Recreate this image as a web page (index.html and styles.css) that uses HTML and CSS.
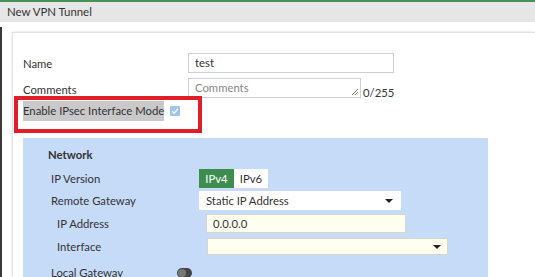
FILE: index.html
```html
<!DOCTYPE html>
<html>
<head>
<meta charset="utf-8">
<link rel="stylesheet" href="styles.css">
</head>
<body>
<div class="titlebar">New VPN Tunnel</div>
<div class="main">
  <div class="card">
    <div class="row row-name">
      <span class="label">Name</span>
      <div class="input name-input">test</div>
    </div>
    <div class="row row-comments">
      <span class="label">Comments</span>
      <div class="textarea"><span class="placeholder">Comments</span>
        <svg class="grip" width="9" height="9" viewBox="0 0 9 9"><path d="M8 2 L2 8 M8 5 L5 8" stroke="#777" stroke-width="1" fill="none"/></svg>
      </div>
      <span class="counter">0/255</span>
    </div>
    <div class="row row-ipsec">
      <span class="label hl">Enable IPsec Interface Mode</span>
      <span class="check"><svg width="10" height="10" viewBox="0 0 10 10"><rect width="10" height="10" rx="1" fill="#9ec4ee"/><path d="M2.2 5.2 L4.2 7.2 L8 2.6" stroke="#fff" stroke-width="1.4" fill="none"/></svg></span>
    </div>
    <div class="panel">
      <div class="panel-title">Network</div>
      <div class="prow prow-ver">
        <span class="plabel">IP Version</span>
        <div class="seg"><span class="seg-on">IPv4</span><span class="seg-off">IPv6</span></div>
      </div>
      <div class="prow prow-gw">
        <span class="plabel">Remote Gateway</span>
        <div class="select white">Static IP Address<span class="arrow"></span></div>
      </div>
      <div class="prow prow-ip sub">
        <span class="plabel">IP Address</span>
        <div class="input ivory ip-input">0.0.0.0</div>
      </div>
      <div class="prow prow-if sub">
        <span class="plabel">Interface</span>
        <div class="select ivory if-select"><span class="arrow"></span></div>
      </div>
      <div class="prow prow-lg">
        <span class="plabel lg-label">Local Gateway</span>
        <span class="toggle"><span class="knob"></span></span>
      </div>
    </div>
  </div>
</div>
</body>
</html>
```
FILE: styles.css
```css
* { box-sizing: border-box; }
html, body { margin: 0; padding: 0; }
body {
  width: 535px; height: 277px; overflow: hidden;
  font-family: Lato, "Liberation Sans", sans-serif;
  font-size: 11.3px; color: #333;
  background: #fff;
}
.titlebar {
  border-top: 2px solid #4b8f55;
  background: #e6e6e6;
  height: 22px;
  padding-left: 7px;
  line-height: 20px;
  font-size: 11.4px;
  color: #333;
}
.main {
  padding: 10px 0 0 12px;
  position: relative;
}
.main::before {
  content: ""; position: absolute; left: 0; top: 5px; bottom: 0; width: 2px; background: #3a3a3a;
}
.card {
  background: #fff;
  border-top: 1px solid #e2e2e2;
  border-left: 1px solid #e6e6e6;
  box-shadow: 0 -1px 2px rgba(0,0,0,0.06), -1px 0 2px rgba(0,0,0,0.04);
  padding: 20px 0 0 10px;
  height: 245px;
}
.row { display: flex; align-items: center; }
.label { width: 165px; flex: none; }
.input, .textarea {
  border: 1px solid #cfcfcf; background: #fff; padding-left: 6px;
}
.row-name { height: 20px; }
.name-input { width: 206px; height: 20px; line-height: 18px; }
.row-comments { margin-top: 5px; height: 20px; align-items: flex-start; }
.row-comments .label { line-height: 24px; }
.textarea { width: 173px; height: 20px; position: relative; line-height: 17px; }
.placeholder { color: #888; }
.grip { position: absolute; right: 1px; bottom: 1px; }
.counter { align-self: flex-end; margin-left: 2px; line-height: 12px; margin-bottom: -1px; }
.row-ipsec { margin-top: 3px; height: 20px; position: relative; }
.row-ipsec::after {
  content: ""; position: absolute; left: -9px; top: -5px; width: 180px; height: 29px;
  border: 4px solid #e11d27;
}
.row-ipsec .label.hl { width: auto; background: #c9c9c9; height: 20px; line-height: 20px; }
.check { margin-left: 6px; display: flex; }
.panel {
  margin-top: 17px;
  background: #c6dbf8;
  width: 465px;
  height: 200px;
  padding: 10px 0 0 25px;
}
.panel-title { font-weight: bold; height: 14px; line-height: 14px; }
.prow { display: flex; align-items: center; padding-left: 3px; }
.plabel { width: 148px; flex: none; }
.sub .plabel { padding-left: 6px; width: 155px; }
.prow-ver { margin-top: 7px; height: 19px; }
.seg { display: flex; height: 19px; line-height: 19px; }
.seg-on { background: #3e8d50; color: #fff; width: 35px; text-align: center; }
.seg-off { background: #fff; width: 34px; text-align: center; }
.prow-gw { margin-top: 3px; height: 19px; }
.select { position: relative; padding-left: 7px; }
.white { background: #fff; width: 202px; height: 19px; line-height: 19px; }
.arrow {
  position: absolute; right: 8px; top: 8px;
  border-left: 4px solid transparent; border-right: 4px solid transparent; border-top: 4px solid #222;
}
.ivory { background: #fffff0; border: 1px solid #d6d6cc; }
.prow-ip { margin-top: 4px; height: 19px; }
.ip-input { width: 200px; height: 19px; line-height: 17px; }
.prow-if { margin-top: 5px; height: 17px; }
.if-select { width: 241px; height: 17px; margin-left: 1px; }
.if-select .arrow { top: 6px; right: 6px; }
.prow-lg { margin-top: 10px; height: 14px; }
.lg-label { width: 126px; }
.toggle {
  display: inline-block; width: 15px; height: 10px; border-radius: 5px; background: #444; position: relative; margin-top: 2px;
}
.knob { position: absolute; left: 1px; top: 1px; width: 8px; height: 8px; border-radius: 50%; background: #777; }
```
